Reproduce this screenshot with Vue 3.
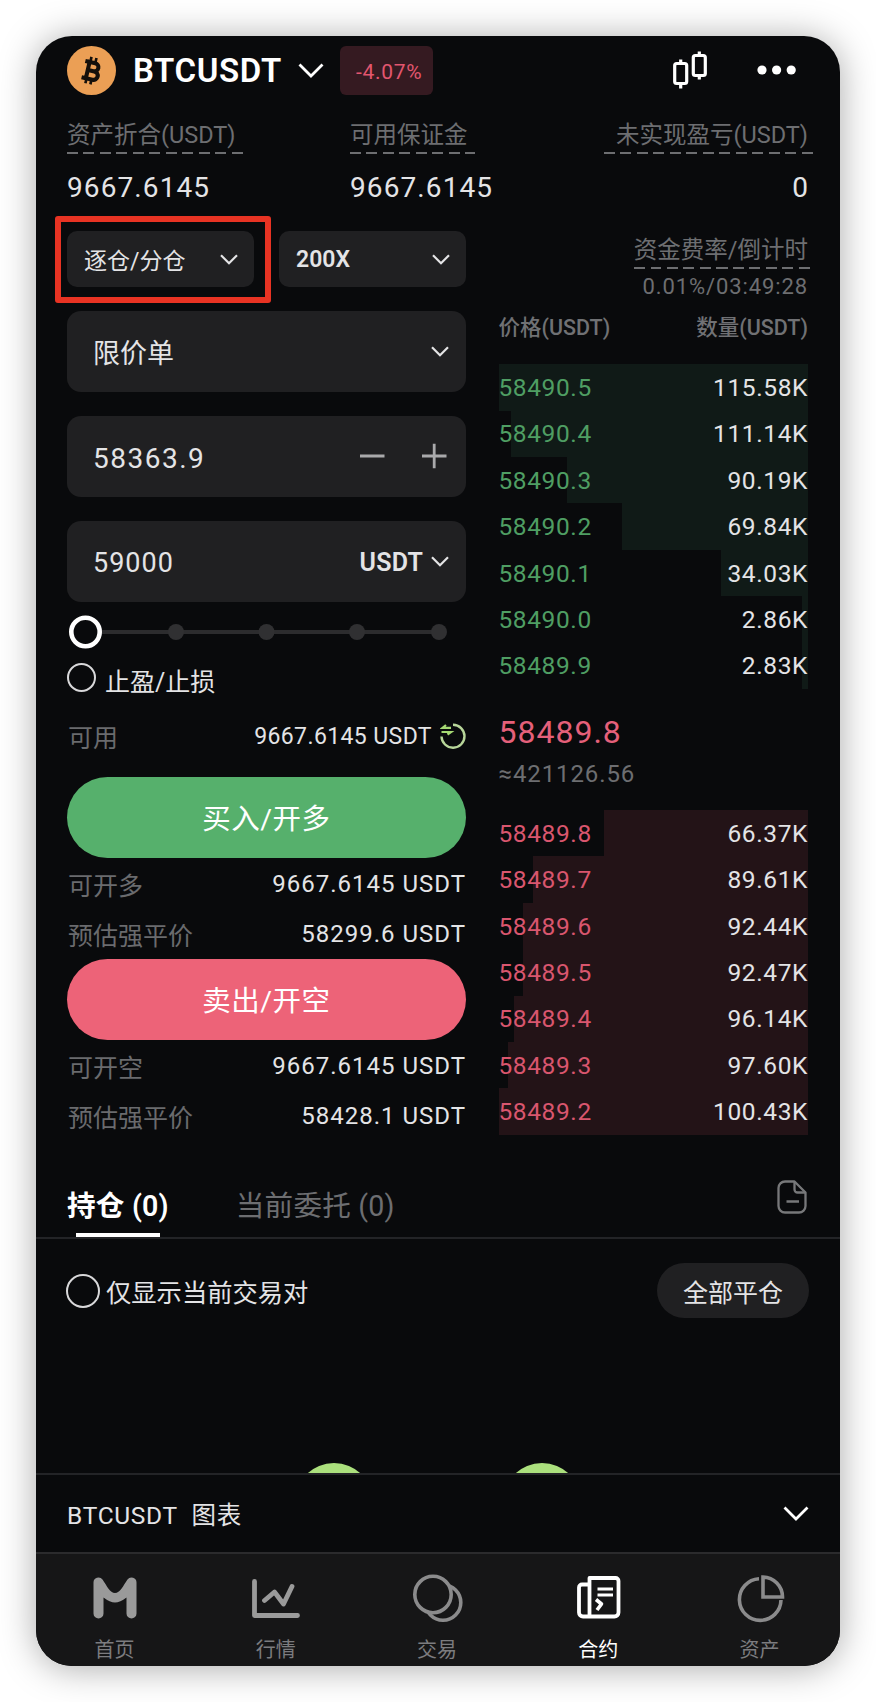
<template>
  <div class="page">
    <div class="phone">
      <!-- Header -->
      <header class="header">
        <svg class="coin" viewBox="0 0 48 48">
          <circle cx="24" cy="24" r="24" fill="#eb9f55" />
          <g transform="rotate(13 24 24)" fill="none" stroke="#15100b" stroke-width="4">
            <path d="M18.500 16.200H26a4 4 0 0 1 0 8h-5.500M20.500 24.200h6.500a4.200 4.200 0 0 1 0 8.400H16M20.300 16.200v16.400M16 16.200h5" />
            <path d="M21 11v5M26 11v5M21 32.500v5M26 32.500v5" stroke-width="2.600" />
          </g>
        </svg>
        <span class="pair">BTCUSDT</span>
        <svg class="pair-arrow" viewBox="0 0 26 16">
          <path d="M1.500 1.500L13 13L24.500 1.500" fill="none" stroke="#fff" stroke-width="2.800" />
        </svg>
        <span class="change">-4.07%</span>
        <svg class="candles" viewBox="0 0 34 38" fill="none" stroke="#fff" stroke-width="3.200">
          <rect x="1.700" y="12.500" width="12" height="20" rx="2" />
          <rect x="20.300" y="4.500" width="12" height="20" rx="2" />
          <path d="M7.700 8.500v4M7.700 32.500v5M26.300 0.500v4M26.300 24.500v4" />
        </svg>
        <svg class="more" viewBox="0 0 40 10" fill="#fff">
          <circle cx="5" cy="5" r="4.600" />
          <circle cx="19.600" cy="5" r="4.600" />
          <circle cx="34.200" cy="5" r="4.600" />
        </svg>
      </header>

      <!-- Account summary -->
      <section class="stats">
        <div v-for="s in stats" :key="s.label" class="stat">
          <div class="dashed">{{ s.label }}</div>
          <div class="stat-value">{{ s.value }}</div>
        </div>
      </section>

      <section class="trade">
        <!-- Order form -->
        <div class="form">
          <div class="selects">
            <div class="select marked">
              <span>逐仓/分仓</span>
              <svg class="arrow" viewBox="0 0 18 11"><path d="M1 1.200L9 9.200L17 1.200" /></svg>
            </div>
            <div class="select">
              <span class="strong">200X</span>
              <svg class="arrow" viewBox="0 0 18 11"><path d="M1 1.200L9 9.200L17 1.200" /></svg>
            </div>
          </div>

          <div class="field">
            <span class="order-type">限价单</span>
            <svg class="arrow" viewBox="0 0 18 11"><path d="M1 1.200L9 9.200L17 1.200" /></svg>
          </div>
          <div class="field">
            <span class="number">58363.9</span>
            <svg class="stepper" viewBox="0 0 88 26" fill="none" stroke="#a9a9ab" stroke-width="2.800">
              <path d="M1 13h24.500M63 13h24.500M75.200 0.800v24.400" />
            </svg>
          </div>
          <div class="field">
            <span class="number amount">59000</span>
            <span class="unit">USDT</span>
            <svg class="arrow" viewBox="0 0 18 11"><path d="M1 1.200L9 9.200L17 1.200" /></svg>
          </div>

          <svg class="slider" viewBox="0 0 399 34">
            <path d="M30 17H372" stroke="#2c2c2e" stroke-width="4" />
            <circle v-for="x in [109, 199.5, 290, 372]" :key="x" :cx="x" cy="17" r="8" fill="#303032" />
            <circle cx="18.500" cy="17" r="14.200" fill="#090a0c" stroke="#fff" stroke-width="4.600" />
          </svg>

          <div class="tpsl">
            <i class="radio"></i>
            <span>止盈/止损</span>
          </div>

          <div class="info available">
            <span class="info-label">可用</span>
            <span class="info-value">9667.6145 USDT</span>
            <svg class="swap" viewBox="0 0 26 26" fill="none" stroke="#a5d973" stroke-width="2.400">
              <path d="M13 1.700A11.500 11.500 0 1 1 1.500 13.500" stroke="#b8d69a" />
              <path d="M11 4.800H2.500L6 2M1.500 9H11L7.500 11.500" stroke-width="2.200" />
            </svg>
          </div>

          <template v-for="side in sides" :key="side.type">
            <button class="submit" :class="side.type">{{ side.action }}</button>
            <div class="infos">
              <div class="info">
                <span class="info-label">{{ side.maxLabel }}</span>
                <span class="info-value">{{ side.max }} USDT</span>
              </div>
              <div class="info">
                <span class="info-label">预估强平价</span>
                <span class="info-value">{{ side.liq }} USDT</span>
              </div>
            </div>
          </template>
        </div>

        <!-- Order book -->
        <div class="book">
          <div class="dashed funding">资金费率/倒计时</div>
          <div class="countdown">0.01%/03:49:28</div>
          <div class="book-head">
            <span>价格(USDT)</span>
            <span>数量(USDT)</span>
          </div>
          <div class="rows green">
            <div v-for="r in upper" :key="r.price" class="row">
              <div class="depth" :style="{ width: r.depth + '%' }"></div>
              <span class="price">{{ r.price }}</span>
              <span class="qty">{{ r.qty }}</span>
            </div>
          </div>
          <div class="last">58489.8</div>
          <div class="approx">≈421126.56</div>
          <div class="rows red">
            <div v-for="r in lower" :key="r.price" class="row">
              <div class="depth" :style="{ width: r.depth + '%' }"></div>
              <span class="price">{{ r.price }}</span>
              <span class="qty">{{ r.qty }}</span>
            </div>
          </div>
        </div>
      </section>

      <!-- Positions -->
      <nav class="tabs">
        <span class="tab active">持仓 (0)</span>
        <span class="tab">当前委托 (0)</span>
        <svg class="doc" viewBox="0 0 30 34" fill="none" stroke="#77787a" stroke-width="2.300" stroke-linejoin="round">
          <path d="M17.500 1.500H8a6.500 6.500 0 0 0-6.500 6.500v18A6.500 6.500 0 0 0 8 32.500h14a6.500 6.500 0 0 0 6.500-6.500V12.500z" />
          <path d="M17.500 1.500v8a3 3 0 0 0 3 3h8M9.500 21.500H22" />
        </svg>
      </nav>
      <div class="filter">
        <i class="radio big"></i>
        <span class="filter-text">仅显示当前交易对</span>
        <button class="close-all">全部平仓</button>
      </div>
      <div class="empty">
        <i class="bubble"></i>
        <i class="bubble"></i>
      </div>

      <div class="chart-bar">
        <span>BTCUSDT&nbsp; 图表</span>
        <svg class="chart-arrow" viewBox="0 0 26 16">
          <path d="M1.500 1.500L13 13L24.500 1.500" fill="none" stroke="#fff" stroke-width="2.800" />
        </svg>
      </div>

      <!-- Bottom navigation -->
      <nav class="bottom">
        <div class="item">
          <svg viewBox="0 0 48 48" fill="#9a9a9a">
            <path d="M2.500 8.500a5 5 0 0 1 9-3C16 12 19 19 24 19S32 12 36.500 5.500a5 5 0 0 1 9 3V39.500a5 5 0 0 1-10 0V23.500Q29 28.500 24 28.500T12.500 23.500V39.500a5 5 0 0 1-10 0z" />
          </svg>
          <span>首页</span>
        </div>
        <div class="item">
          <svg viewBox="0 0 48 48" fill="none" stroke="#9a9a9a" stroke-width="4.800" stroke-linecap="round" stroke-linejoin="round">
            <path d="M2.500 7.500V41.500H45.500M12.500 26.500L22.500 18L31.500 30L40 12.500" />
          </svg>
          <span>行情</span>
        </div>
        <div class="item">
          <svg viewBox="0 0 48 48" fill="none" stroke="#8b8b8c" stroke-width="3.600">
            <circle cx="30" cy="28.500" r="17.800" />
            <circle cx="20" cy="20.500" r="18.200" fill="#161617" />
          </svg>
          <span>交易</span>
        </div>
        <div class="item on">
          <svg viewBox="0 0 48 48" fill="none" stroke="#fff" stroke-width="3.800" stroke-linejoin="round">
            <path d="M15 10.500H8a3 3 0 0 0-3 3V38.500a4 4 0 0 0 4 4H40.500a4 4 0 0 0 4-4V7a3 3 0 0 0-3-3H15.500V42.500" />
            <path d="M23.500 15H39M23.500 21H39" stroke-width="3.200" />
            <path d="M22 25.500L27.500 30L23 36" stroke-width="3.600" />
          </svg>
          <span>合约</span>
        </div>
        <div class="item">
          <svg viewBox="0 0 48 48" fill="none" stroke="#8b8b8c" stroke-width="3.600">
            <path d="M24 4.800A20.800 20.800 0 1 0 46 26" />
            <path d="M28 3V23H47.500A20 20 0 0 0 28 3z" />
          </svg>
          <span>资产</span>
        </div>
      </nav>
    </div>
  </div>
</template>

<script setup>
const stats = [
  { label: "资产折合(USDT)", value: "9667.6145" },
  { label: "可用保证金", value: "9667.6145" },
  { label: "未实现盈亏(USDT)", value: "0" }
];

const sides = [
  { type: "buy", action: "买入/开多", maxLabel: "可开多", max: "9667.6145", liq: "58299.6" },
  { type: "sell", action: "卖出/开空", maxLabel: "可开空", max: "9667.6145", liq: "58428.1" }
];

const upper = [
  { price: "58490.5", qty: "115.58K", depth: 100 },
  { price: "58490.4", qty: "111.14K", depth: 96 },
  { price: "58490.3", qty: "90.19K", depth: 78 },
  { price: "58490.2", qty: "69.84K", depth: 60 },
  { price: "58490.1", qty: "34.03K", depth: 28 },
  { price: "58490.0", qty: "2.86K", depth: 2 },
  { price: "58489.9", qty: "2.83K", depth: 2 }
];

const lower = [
  { price: "58489.8", qty: "66.37K", depth: 66 },
  { price: "58489.7", qty: "89.61K", depth: 89 },
  { price: "58489.6", qty: "92.44K", depth: 92 },
  { price: "58489.5", qty: "92.47K", depth: 92 },
  { price: "58489.4", qty: "96.14K", depth: 95 },
  { price: "58489.3", qty: "97.60K", depth: 97 },
  { price: "58489.2", qty: "100.43K", depth: 100 }
];
</script>

<style>
body {
  margin: 0;
  background: #fff;
}
</style>

<style scoped>
.page {
  box-sizing: border-box;
  height: 1702px;
  padding: 36px;
  overflow: hidden;
  background: #fff;
}
.phone {
  display: flex;
  flex-direction: column;
  width: 804px;
  height: 1630px;
  border-radius: 36px;
  overflow: hidden;
  background: #090a0c;
  color: #e4e4e6;
  font-family: Roboto, "Noto Sans CJK SC", sans-serif;
  box-shadow: 0 2px 36px rgba(0, 0, 0, 0.34);
}
svg {
  display: block;
  flex: none;
}
button {
  border: none;
  padding: 0;
  font-family: inherit;
  color: #fff;
}

/* header */
.header {
  display: flex;
  align-items: center;
  height: 68px;
  padding: 0 43px 0 31px;
}
.coin {
  width: 49px;
  height: 49px;
}
.pair {
  width: 164px;
  margin-left: 17px;
  font-size: 33px;
  font-weight: 600;
  letter-spacing: 0.6px;
  color: #fff;
}
.pair-arrow {
  width: 26px;
  height: 16px;
  margin-left: 1px;
  margin-top: 2px;
}
.change {
  box-sizing: border-box;
  width: 93px;
  height: 49px;
  margin-left: 16px;
  margin-top: 1px;
  padding-left: 16px;
  border-radius: 6px;
  background: #351a21;
  color: #e2566f;
  font-size: 21px;
  line-height: 52px;
  letter-spacing: 0.7px;
}
.candles {
  width: 34px;
  height: 38px;
  margin-left: auto;
}
.more {
  width: 40px;
  height: 10px;
  margin-left: 50px;
}

/* summary */
.stats {
  display: grid;
  grid-template-columns: 283px 1fr auto;
  padding: 0 32px 0 31px;
  margin-top: 14px;
}
.stat {
  display: flex;
  flex-direction: column;
  align-items: flex-start;
}
.stat:last-child {
  align-items: flex-end;
}
.dashed {
  padding-bottom: 2px;
  padding-right: 7px;
  font-size: 23.5px;
  line-height: 34px;
  color: #6d6e71;
  background: repeating-linear-gradient(90deg, #6d6e71 0, #6d6e71 11px, transparent 11px, transparent 16.5px) left bottom / 100% 2px no-repeat;
}
.stat:last-child .dashed {
  margin-right: -6px;
  padding-right: 6px;
  padding-left: 12px;
}
.stat-value {
  margin-top: 17px;
  font-size: 28px;
  line-height: 34px;
  letter-spacing: 1.1px;
}
.stat:last-child .stat-value {
  letter-spacing: 0;
}

/* trade area */
.trade {
  display: flex;
  justify-content: space-between;
  margin-top: 26px;
  padding: 0 32px 0 31px;
}
.form {
  width: 399px;
}
.selects {
  display: flex;
  justify-content: space-between;
}
.select {
  position: relative;
  box-sizing: border-box;
  display: flex;
  align-items: center;
  justify-content: space-between;
  width: 187px;
  height: 56px;
  padding: 0 16px 0 17px;
  border-radius: 10px;
  background: #202022;
  font-size: 23px;
}
.select.marked::after {
  content: "";
  position: absolute;
  left: -12px;
  top: -15px;
  width: 204px;
  height: 75px;
  border: 6px solid #e83323;
  border-radius: 3px;
}
.strong {
  font-weight: 600;
}
.arrow {
  width: 18px;
  height: 11px;
  fill: none;
  stroke: #e4e4e6;
  stroke-width: 2.2;
}
.field {
  box-sizing: border-box;
  display: flex;
  align-items: center;
  justify-content: space-between;
  height: 81px;
  margin-top: 24px;
  padding: 0 17px 0 26px;
  border-radius: 14px;
  background: #202022;
}
.order-type {
  font-size: 27px;
}
.number {
  padding-top: 3px;
  font-size: 28px;
  letter-spacing: 1.5px;
}
.amount {
  font-size: 27px;
  letter-spacing: 1px;
}
.stepper {
  width: 88px;
  height: 26px;
  margin-right: 2px;
  margin-bottom: 1px;
}
.unit {
  margin-left: auto;
  margin-right: 8px;
  padding-top: 1px;
  font-size: 25px;
  font-weight: 600;
  letter-spacing: 0.2px;
}
.slider {
  width: 399px;
  height: 34px;
  margin-top: 13px;
}
.tpsl {
  display: flex;
  align-items: center;
  gap: 9px;
  height: 29px;
  margin-top: 14px;
  margin-bottom: 24px;
  font-size: 25px;
  line-height: 29px;
}
.tpsl span {
  padding-top: 9px;
}
.radio {
  box-sizing: border-box;
  flex: none;
  width: 29px;
  height: 29px;
  border: 2.4px solid #d8d8da;
  border-radius: 50%;
}
.radio.big {
  width: 34px;
  height: 34px;
}
.info {
  display: flex;
  align-items: center;
  height: 50px;
}
.info-label {
  flex: 1;
  padding-left: 1px;
  font-size: 25px;
  color: #6a6b6e;
}
.info-value {
  font-size: 24px;
  letter-spacing: 1px;
}
.available {
  height: 40px;
  margin-bottom: 21px;
}
.available .info-value {
  font-size: 23px;
  letter-spacing: 0.4px;
}
.swap {
  width: 26px;
  height: 26px;
  margin-left: 8px;
}
.submit {
  display: block;
  width: 399px;
  height: 81px;
  padding-bottom: 2px;
  border-radius: 41px;
  font-size: 28.5px;
  letter-spacing: 0.5px;
}
.submit.buy {
  background: #56b06c;
}
.submit.sell {
  background: #ed6378;
}
.infos {
  padding-top: 1px;
}

/* order book */
.book {
  display: flex;
  flex-direction: column;
  width: 309.5px;
}
.funding {
  align-self: flex-end;
  margin: 2px -6px 0 0;
  padding-right: 6px;
}
.countdown {
  margin-top: 6px;
  text-align: right;
  font-size: 22px;
  line-height: 24px;
  letter-spacing: 0.9px;
  color: #6d6e71;
}
.book-head {
  display: flex;
  justify-content: space-between;
  margin: 17px 0 24.3px;
  font-size: 21.5px;
  line-height: 24px;
  font-weight: 500;
  color: #707174;
}
.row {
  position: relative;
  display: flex;
  align-items: center;
  justify-content: space-between;
  height: 46.4px;
  font-size: 24.5px;
  letter-spacing: 0.6px;
}
.depth {
  position: absolute;
  right: 0;
  top: 0;
  height: 100%;
}
.price,
.qty {
  position: relative;
}
.green .price {
  color: #4f9e63;
}
.green .depth {
  background: #101a17;
}
.red .price {
  color: #d9566e;
}
.red .depth {
  background: #231317;
}
.last {
  margin-top: 23px;
  font-size: 32px;
  line-height: 40px;
  letter-spacing: 1px;
  color: #e5607a;
}
.approx {
  margin: 7px 0 21px;
  font-size: 24px;
  line-height: 30px;
  letter-spacing: 0.9px;
  color: #6d6e71;
}

/* positions */
.tabs {
  display: flex;
  height: 50px;
  margin-top: 46px;
  padding: 0 33px 0 31px;
  border-bottom: 2px solid #232427;
}
.tab {
  position: relative;
  margin-right: 67px;
  font-size: 28.6px;
  line-height: 39px;
  letter-spacing: 0.2px;
  color: #6d6e71;
}
.tab.active {
  color: #fff;
  font-weight: 600;
}
.tab.active::after {
  content: "";
  position: absolute;
  left: 9px;
  bottom: 0;
  width: 84px;
  height: 4px;
  background: #fff;
}
.doc {
  width: 30px;
  height: 34px;
  margin-left: auto;
  margin-top: -7px;
}
.filter {
  display: flex;
  align-items: center;
  height: 55px;
  margin-top: 24px;
  padding: 0 31px 0 30px;
}
.filter-text {
  margin-left: 6px;
  padding-top: 1px;
  font-size: 25.3px;
}
.close-all {
  width: 152px;
  height: 55px;
  margin-left: auto;
  border-radius: 28px;
  background: #202022;
  color: #e4e4e6;
  font-size: 25px;
}
.empty {
  box-sizing: border-box;
  display: flex;
  gap: 130px;
  height: 155px;
  padding: 145px 0 0 259px;
  overflow: hidden;
}
.bubble {
  flex: none;
  width: 78px;
  height: 78px;
  border-radius: 50%;
  background: #abe07d;
}
.chart-bar {
  box-sizing: border-box;
  display: flex;
  align-items: center;
  justify-content: space-between;
  height: 79px;
  padding: 0 31px 0 31px;
  border-top: 2px solid #232427;
  font-size: 24.5px;
  letter-spacing: 0.7px;
}
.chart-arrow {
  width: 26px;
  height: 16px;
}

/* bottom nav */
.bottom {
  flex: 1;
  display: flex;
  margin-left: -2px;
  border-top: 2px solid #2b2b2d;
  background: #161617;
}
.item {
  flex: 1;
  display: flex;
  flex-direction: column;
  align-items: center;
  padding-top: 20px;
  font-size: 20px;
  line-height: 24px;
  color: #7c7c7f;
}
.item svg {
  width: 48px;
  height: 48px;
  margin-bottom: 16px;
  overflow: visible;
}
.item.on {
  color: #fff;
}
</style>
